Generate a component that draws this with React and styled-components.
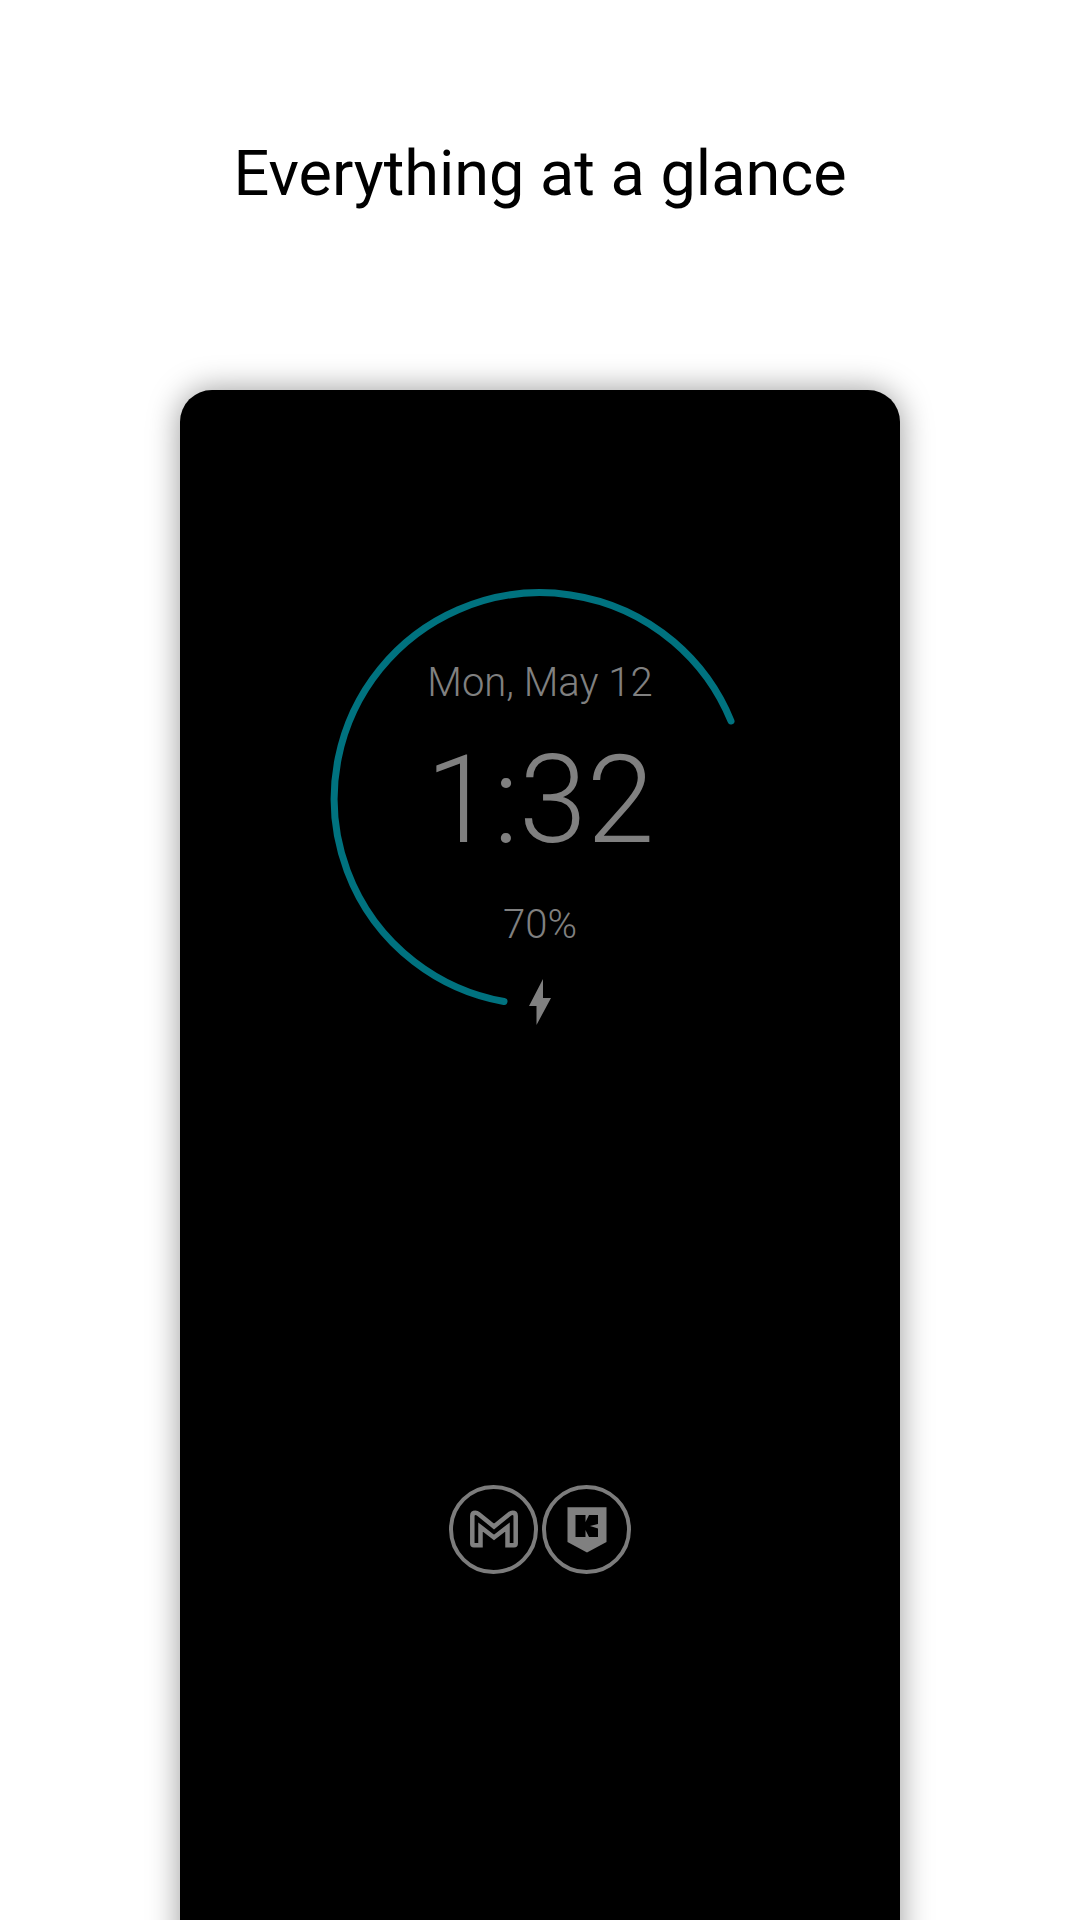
import React from 'react';
import styled, { createGlobalStyle } from 'styled-components';

const GlobalStyle = createGlobalStyle`
  * { box-sizing: border-box; }
  body {
    margin: 0;
    background: #fff;
    color: #000;
    font-family: Roboto, "Liberation Sans", sans-serif;
  }
`;

const Page = styled.main`
  min-height: 100vh;
  display: flex;
  flex-direction: column;
  align-items: center;
  overflow: hidden;
`;

const Headline = styled.h1`
  margin: 0;
  padding: 136px 24px 178px;
  font-size: 63px;
  line-height: 76px;
  font-weight: 400;
  text-align: center;
`;

const Phone = styled.section`
  flex: 1;
  width: 66.6667%;
  margin-bottom: -40px;
  display: flex;
  flex-direction: column;
  align-items: center;
  gap: 460px;
  padding: 198px 24px 40px;
  border-radius: 32px 32px 0 0;
  background: #000;
  color: #808080;
  box-shadow: 0 0 32px rgba(0, 0, 0, 0.4);
`;

const Clock = styled.div`
  display: grid;
  justify-items: center;
`;

const Ring = styled.svg`
  grid-area: 1 / 1;
  width: 422px;
  height: 422px;
`;

const Readout = styled.div`
  grid-area: 1 / 1;
  display: flex;
  flex-direction: column;
  align-items: center;
  padding-top: 71px;
  font-weight: 300;
`;

const Label = styled.span`
  font-size: 40px;
  line-height: 48px;
`;

const Time = styled.time`
  padding: 28px 0 34px;
  font-size: 122px;
  line-height: 132px;
`;

const Bolt = styled.svg`
  width: 22px;
  height: 46px;
  margin-top: 30px;
`;

const Notifications = styled.div`
  display: flex;
  gap: 4px;
`;

const Badge = styled.span`
  display: grid;
  place-items: center;
  width: 89px;
  height: 89px;
  border: 4px solid #7c7c7c;
  border-radius: 50%;
`;

const Glyph = styled.svg`
  width: 48px;
  height: 48px;
`;

export default function App() {
  return (
    <>
      <GlobalStyle />
      <Page>
        <Headline>Everything at a glance</Headline>
        <Phone>
          <Clock>
            <Ring viewBox="0 0 422 422" aria-hidden="true">
              <path d="M175 413.500A206 206 0 1 1 402 133" fill="none" stroke="#00727f" strokeWidth="7" strokeLinecap="round" />
            </Ring>
            <Readout>
              <Label>Mon, May 12</Label>
              <Time>1:32</Time>
              <Label>70%</Label>
              <Bolt viewBox="0 0 22 46" aria-hidden="true">
                <path d="M14 0V19H22L7.500 46V27H0Z" fill="#808080" />
              </Bolt>
            </Readout>
          </Clock>
          <Notifications>
            <Badge>
              <Glyph viewBox="0 0 48 48" aria-label="Gmail">
                <path d="M4 39.200Q2.300 39.200 2.300 37.500V10Q2.300 6.800 5.500 6.800Q7 6.800 8.500 8L24 20.500L39.500 8Q41 6.800 42.500 6.800Q45.700 6.800 45.700 10V37.500Q45.700 39.200 44 39.200H37.500V21L24 31.500L10.500 21V39.200Z" fill="none" stroke="#808080" strokeWidth="4.500" />
              </Glyph>
            </Badge>
            <Badge>
              <Glyph viewBox="0 0 48 48" aria-label="K">
                <path fillRule="evenodd" d="M4.500 1.200H43.500V36L24 46.500L4.500 36ZM12.500 9V31H22.500V24L26 31H35V22.500L27 20L35 18V9H26L22.500 16V9Z" fill="#808080" />
              </Glyph>
            </Badge>
          </Notifications>
        </Phone>
      </Page>
    </>
  );
}
